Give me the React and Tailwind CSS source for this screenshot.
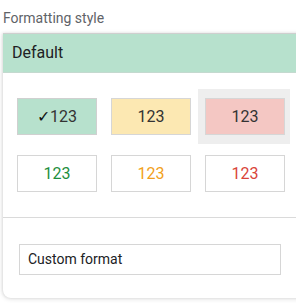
export default function App() {
  const font = { fontFamily: 'Roboto, "Noto Sans", sans-serif' };
  return (
    <div className="w-[296px] h-[303px] bg-white overflow-hidden relative" style={font}>
      <div className="pl-[3px] pt-[8px] h-[33px] text-[14px] leading-[20px] text-[#5f6368]">Formatting style</div>
      <div className="ml-[3px] w-[320px] rounded-b-[8px] bg-white shadow-[0_1px_5px_rgba(0,0,0,0.12),-1px_0_3px_rgba(0,0,0,0.08)]">
        <div className="h-[40px] bg-[#b7e1cd] border-t border-[#cfcfcf] border-b border-b-[#c4d9cf] flex items-center pl-[9px] text-[16px] text-[#202124]">
          Default
        </div>
        <div className="pl-[14px] pt-[16px]">
          <div className="grid grid-cols-[94px_94px_94px] gap-y-[11px]">
            <div className="h-[55px] flex items-center">
              <div className="w-[80px] h-[37px] bg-[#b7e1cd] border border-[#d0d0d0] flex items-center justify-center text-[16px] text-[#333]"><span className="text-[#111] font-medium">✓</span>123</div>
            </div>
            <div className="h-[55px] flex items-center">
              <div className="w-[80px] h-[37px] bg-[#fce8b2] border border-[#d6d6d6] flex items-center justify-center text-[16px] text-[#333]">123</div>
            </div>
            <div className="h-[55px] flex items-center -ml-[7px] pl-[7px] w-[92px] bg-[#eeeeee]">
              <div className="w-[80px] h-[37px] bg-[#f4c7c3] border border-[#d6d6d6] flex items-center justify-center text-[16px] text-[#333]">123</div>
            </div>
            <div className="h-[37px] flex items-center">
              <div className="w-[80px] h-[37px] bg-white border border-[#d6d6d6] flex items-center justify-center text-[16px] text-[#1e8e3e]">123</div>
            </div>
            <div className="h-[37px] flex items-center">
              <div className="w-[80px] h-[37px] bg-white border border-[#d6d6d6] flex items-center justify-center text-[16px] text-[#f29f1c]">123</div>
            </div>
            <div className="h-[37px] flex items-center">
              <div className="w-[80px] h-[37px] bg-white border border-[#d6d6d6] flex items-center justify-center text-[16px] text-[#d9443a]">123</div>
            </div>
          </div>
        </div>
        <div className="mt-[25px] border-t border-[#dadada]"></div>
        <div className="pt-[26px] pb-[23px] pl-[16px]">
          <div className="w-[262px] h-[31px] border border-[#d6d6d6] flex items-center pl-[8px] text-[14px] text-[#202124]">Custom format</div>
        </div>
      </div>
    </div>
  );
}
